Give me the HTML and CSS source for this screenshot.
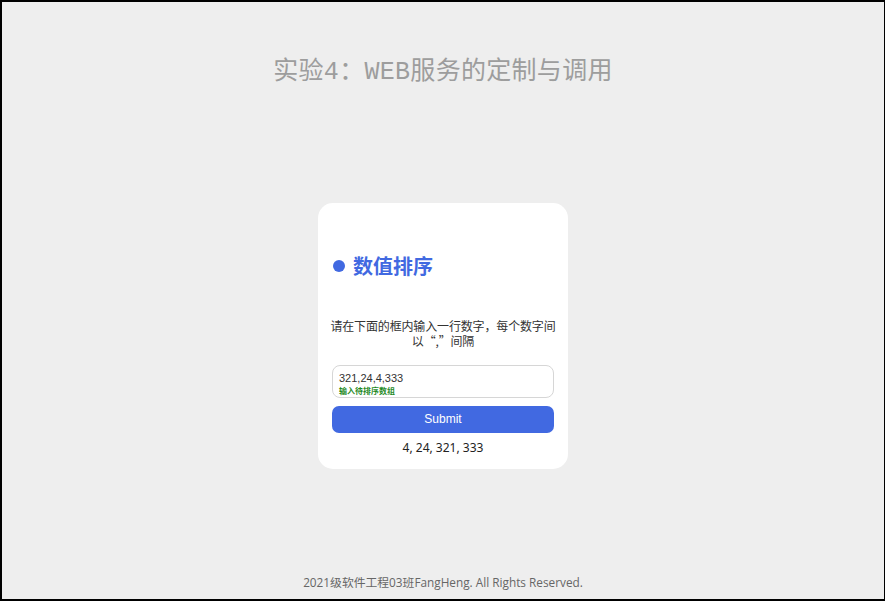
FILE: index.html
```html
<!DOCTYPE html>
<html lang="zh-CN">
<head>
<meta charset="utf-8">
<title>实验4：WEB服务的定制与调用</title>
<link rel="stylesheet" href="styles.css">
</head>
<body>
<div class="page">
  <header class="header">
    <h1 class="title">实验4：WEB服务的定制与调用</h1>
  </header>
  <main class="main">
    <section class="card">
      <h2 class="card-title"><span class="dot"></span>数值排序</h2>
      <p class="desc">请在下面的框内输入一行数字，每个数字间以“,”间隔</p>
      <div class="field">
        <div class="field-value">321,24,4,333</div>
        <div class="field-label">输入待排序数组</div>
      </div>
      <button class="submit" type="button">Submit</button>
      <div class="result">4, 24, 321, 333</div>
    </section>
  </main>
  <footer class="footer">2021级软件工程03班FangHeng. All Rights Reserved.</footer>
</div>
</body>
</html>
```

FILE: styles.css
```css
html, body {
  margin: 0;
  padding: 0;
  height: 100%;
}
body {
  background: #000;
}
.page {
  box-sizing: border-box;
  height: 100%;
  border-style: solid;
  border-color: #000;
  border-width: 2px 1px 2px 2px;
  background: #eeeeee;
  display: flex;
  flex-direction: column;
  font-family: "Noto Sans", "Noto Sans CJK SC", sans-serif;
}
.header {
  padding: 56px 0 11px;
}
.title {
  margin: 0;
  text-align: center;
  font-family: "Liberation Mono", "Noto Sans CJK SC", monospace;
  font-weight: normal;
  font-size: 25px;
  line-height: 30px;
  letter-spacing: 0.3px;
  color: #9d9d9d;
}
.main {
  flex: 1;
  display: flex;
  align-items: center;
  justify-content: center;
}
.card {
  box-sizing: border-box;
  width: 250px;
  background: #fff;
  border-radius: 15px;
  padding: 0 14px 12px;
}
.card-title {
  margin: 49px 0 0;
  display: flex;
  align-items: center;
  gap: 8px;
  height: 28px;
  font-family: "Noto Sans CJK SC", sans-serif;
  font-size: 20px;
  font-weight: 700;
  color: #4169e1;
}
.dot {
  width: 12px;
  height: 12px;
  border-radius: 50%;
  background: #4169e1;
  margin-left: 1px;
}
.desc {
  margin: 38px -3px 0;
  text-align: center;
  font-family: "Noto Sans CJK SC", sans-serif;
  font-size: 12px;
  line-height: 15px;
  letter-spacing: -0.15px;
  color: #333;
}
.field {
  margin-top: 17px;
  height: 33px;
  box-sizing: border-box;
  border: 1px solid #d6d6d6;
  border-radius: 8px;
  padding: 5px 6px 0;
}
.field-value {
  font-family: "Liberation Sans", "Noto Sans CJK SC", sans-serif;
  font-size: 11px;
  line-height: 14px;
  color: #333;
}
.field-label {
  font-family: "Noto Sans CJK SC", sans-serif;
  font-size: 8px;
  line-height: 11px;
  font-weight: 700;
  color: #1f8a1f;
}
.submit {
  display: block;
  width: 100%;
  margin-top: 8px;
  height: 27px;
  border: 0;
  border-radius: 7px;
  background: #4169e1;
  color: #fff;
  font-family: "Liberation Sans", sans-serif;
  font-size: 12px;
  padding: 0;
}
.result {
  margin-top: 6px;
  text-align: center;
  font-size: 12px;
  line-height: 18px;
  color: #222;
}
.footer {
  text-align: center;
  font-size: 11.8px;
  line-height: 20px;
  padding-bottom: 7px;
  color: #666;
  font-family: "Open Sans", "Noto Sans CJK SC", sans-serif;
}
```
